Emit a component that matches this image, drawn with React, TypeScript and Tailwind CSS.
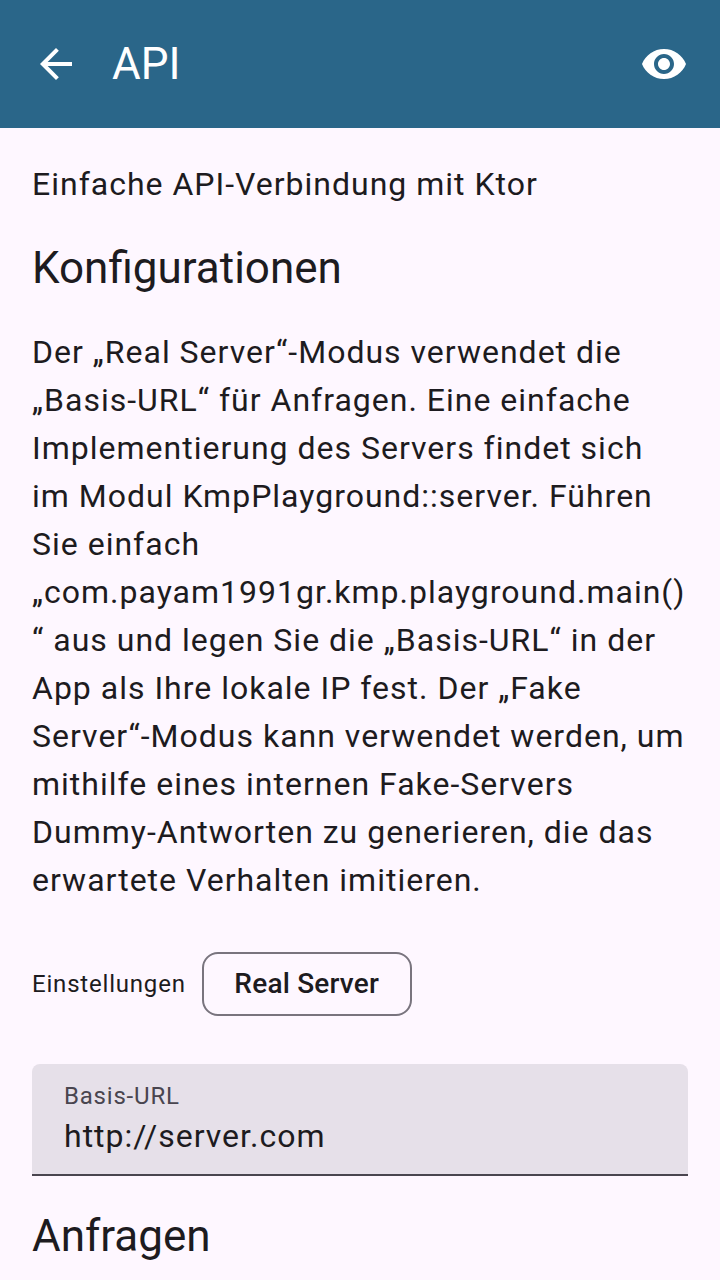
import React from "react";

const paragraph = [
  "Der „Real Server“-Modus verwendet die",
  "„Basis-URL“ für Anfragen. Eine einfache",
  "Implementierung des Servers findet sich",
  "im Modul KmpPlayground::server. Führen",
  "Sie einfach",
  "„com.payam1991gr.kmp.playground.main()",
  "“ aus und legen Sie die „Basis-URL“ in der",
  "App als Ihre lokale IP fest. Der „Fake",
  "Server“-Modus kann verwendet werden, um",
  "mithilfe eines internen Fake-Servers",
  "Dummy-Antworten zu generieren, die das",
  "erwartete Verhalten imitieren.",
];

export default function App() {
  return (
    <div className="flex h-[1280px] w-[720px] flex-col overflow-hidden bg-[#fef7ff] font-['Roboto',sans-serif] text-[#1d1b20]">
      <header className="flex h-32 shrink-0 items-center bg-[#2a6689] pl-8 pr-8 text-white">
        <button aria-label="Zurück" className="flex size-12 items-center justify-center">
          <svg viewBox="0 0 24 24" className="size-12" fill="currentColor">
            <path d="M20 11H7.83l5.59-5.59L12 4l-8 8 8 8 1.41-1.41L7.83 13H20v-2z" />
          </svg>
        </button>
        <h1 className="ml-8 flex-1 text-[44px] leading-[56px]">API</h1>
        <button aria-label="Anzeigen" className="flex size-12 items-center justify-center">
          <svg viewBox="0 0 24 24" className="size-12" fill="currentColor">
            <path d="M12 4.5C7 4.5 2.73 7.61 1 12c1.73 4.39 6 7.5 11 7.5s9.27-3.11 11-7.5c-1.73-4.39-6-7.5-11-7.5zM12 17c-2.76 0-5-2.24-5-5s2.24-5 5-5 5 2.24 5 5-2.24 5-5 5zm0-8c-1.66 0-3 1.34-3 3s1.34 3 3 3 3-1.34 3-3-1.34-3-3-3z" />
          </svg>
        </button>
      </header>
      <main className="flex flex-col px-8 pt-8">
        <p className="text-[32px] leading-[48px] tracking-[1px]">Einfache API-Verbindung mit Ktor</p>
        <h2 className="mt-8 text-[44px] leading-[56px]">Konfigurationen</h2>
        <div className="mt-8 whitespace-nowrap text-[32px] leading-[48px] tracking-[1px]">
          {paragraph.map((line) => (
            <p key={line}>{line}</p>
          ))}
        </div>
        <div className="mt-12 flex h-16 items-center">
          <span className="text-[24px] leading-8 tracking-[0.8px]">Einstellungen</span>
          <button className="ml-4 flex h-16 w-[210px] items-center justify-center rounded-2xl border-2 border-[#79747e] text-[28px] font-medium leading-10 tracking-[0.2px]">
            Real Server
          </button>
        </div>
        <div className="mt-12 flex h-28 flex-col rounded-t-lg border-b-2 border-[#49454f] bg-[#e6e0e9] px-8 pt-4">
          <label className="text-[24px] leading-8 tracking-[0.8px] text-[#49454f]">Basis-URL</label>
          <span className="text-[32px] leading-[48px] tracking-[1px]">http://server.com</span>
        </div>
        <h2 className="mt-8 text-[44px] leading-[56px]">Anfragen</h2>
      </main>
    </div>
  );
}
